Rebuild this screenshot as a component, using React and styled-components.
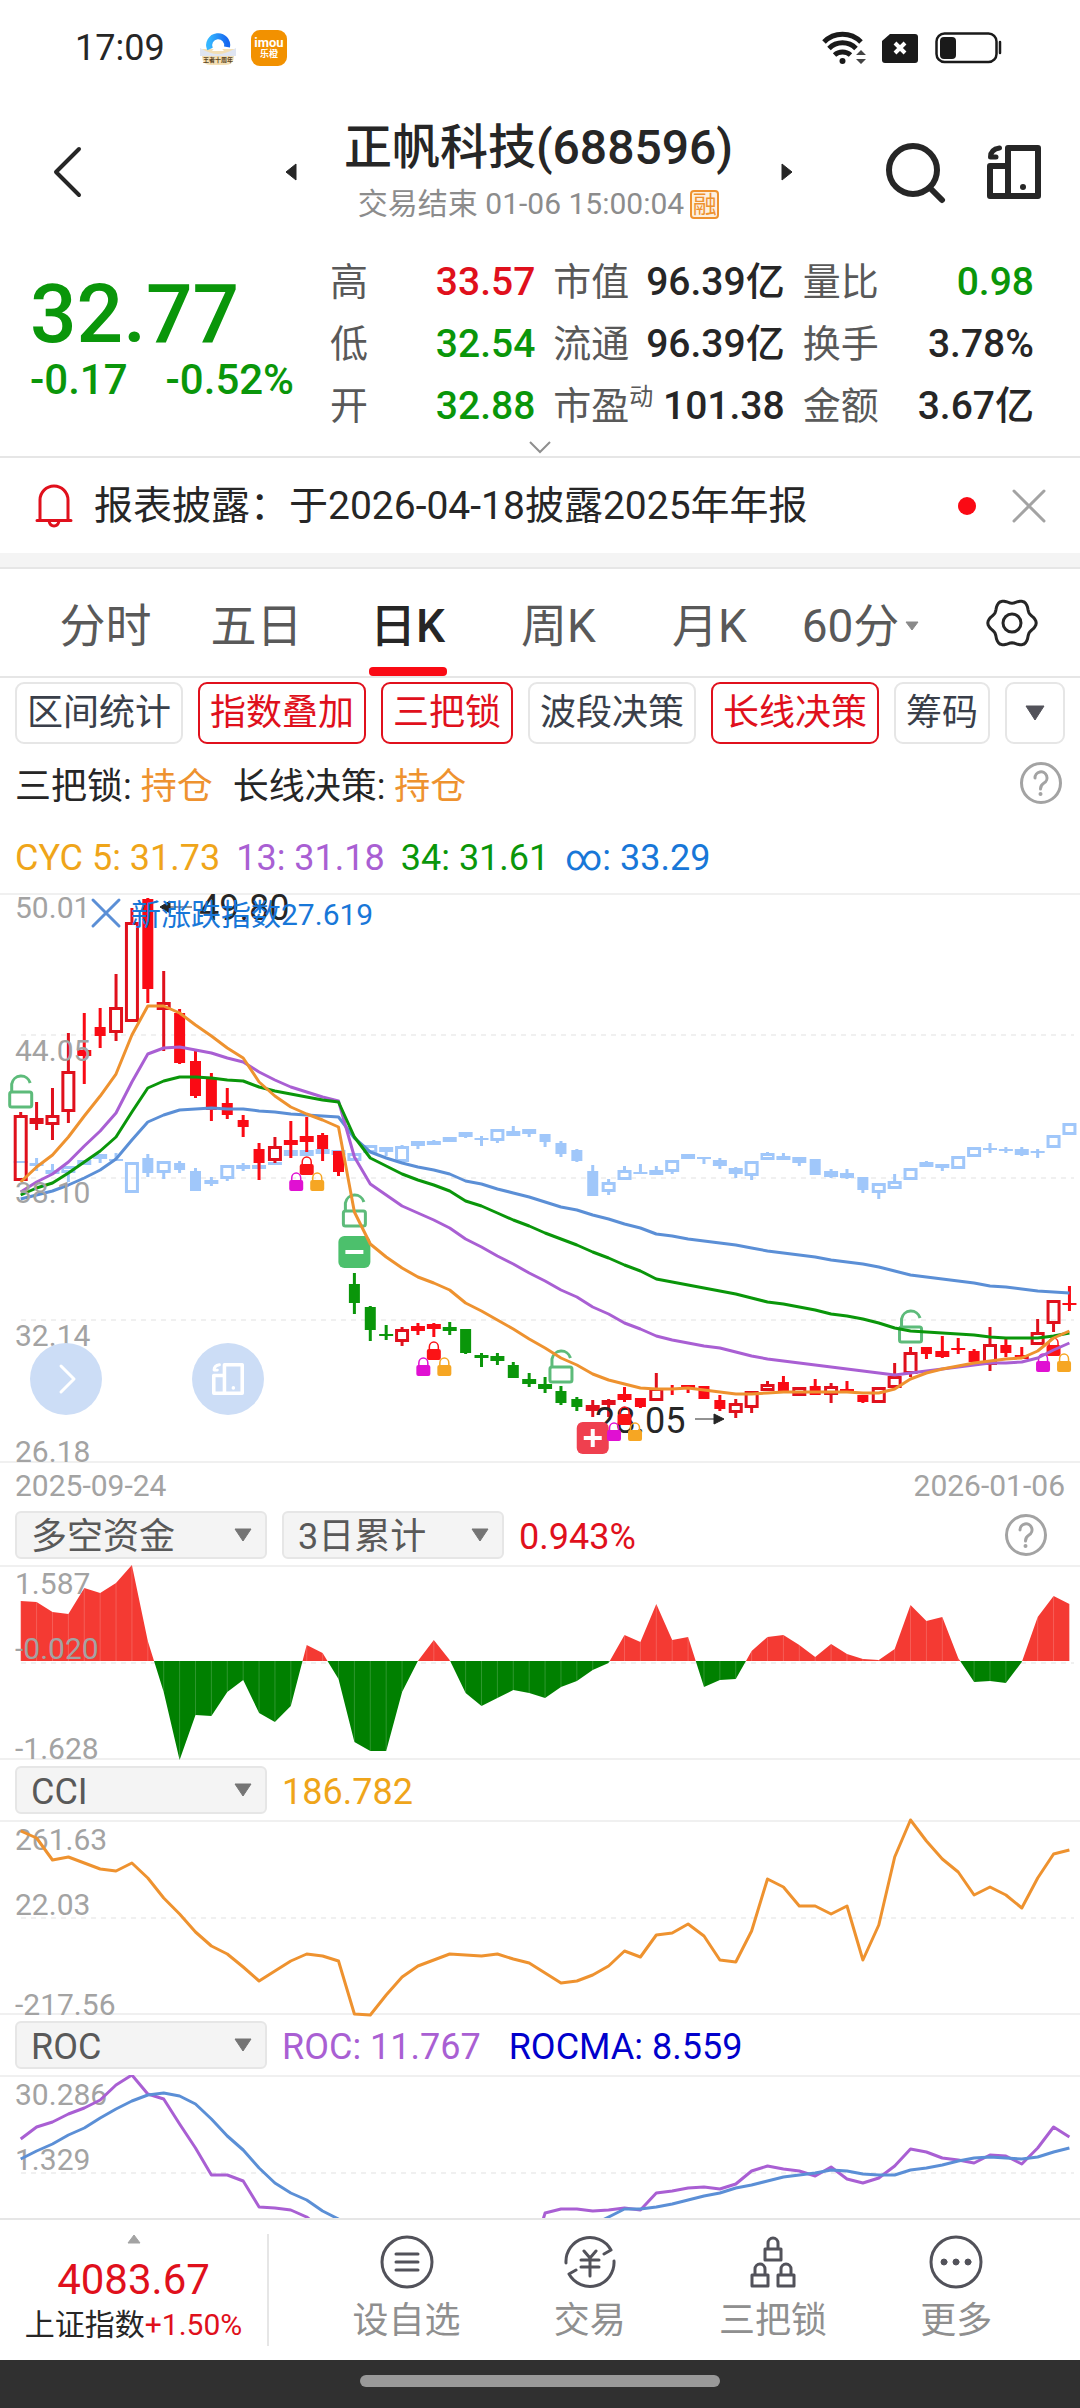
import React from "react";
import styled, { createGlobalStyle } from "styled-components";

const C = {
  ink: "#262626",
  mid: "#595959",
  soft: "#8f8f8f",
  axis: "#a3a3a3",
  line: "#e6e6e6",
  grid: "#f0f0f0",
  red: "#e0101c",
  hot: "#fa0a14",
  green: "#0a960a",
  orange: "#ee922f",
  gold: "#efa51a",
  purple: "#a95fd3",
  blue: "#5b8fd6",
  sky: "#1877d8",
  pale: "#a0c7fa",
};

const FONT = 'Roboto, "Noto Sans CJK SC", sans-serif';

const Global = createGlobalStyle`
  * { box-sizing: border-box; }
  body { margin: 0; background: #fff; color: ${C.ink}; font-family: ${FONT}; font-size: 36px; }
  button, select { font: inherit; color: inherit; background: none; border: 0; padding: 0; margin: 0; }
  svg { display: block; }
`;

/* ---------- series ---------- */

const STEP = 15.89;
const xAt = (i) => 20.7 + STEP * i;

// [kind, high, top, bottom, low]; h = hollow, r = filled red, g = filled green
const CANDLES = [
  ["h", 219, 222, 288, 288], ["h", 209, 225, 231, 237], ["h", 195, 222, 232, 247], ["h", 140, 178, 219, 230],
  ["r", 120, 157, 163, 191], ["r", 115, 134, 143, 155], ["h", 81, 114, 140, 148], ["h", 15, 29, 129, 129],
  ["r", 5, 6, 96, 110], ["h", 78, 109, 117, 158], ["r", 116, 120, 170, 171], ["r", 158, 168, 203, 205],
  ["r", 180, 185, 217, 228], ["r", 195, 210, 222, 226], ["r", 222, 227, 234, 244], ["r", 250, 256, 270, 287],
  ["h", 244, 253, 268, 270], ["r", 228, 247, 252, 265], ["r", 224, 243, 249, 259], ["r", 240, 242, 256, 268],
  ["r", 258, 258, 279, 283], ["g", 380, 391, 410, 421], ["g", 413, 414, 437, 448], ["g", 432, 441, 443, 447],
  ["h", 434, 436, 449, 453], ["r", 430, 433, 438, 442], ["r", 430, 431, 436, 444], ["g", 429, 434, 438, 442],
  ["g", 436, 436, 460, 461], ["g", 460, 462, 465, 474], ["g", 460, 463, 468, 472], ["g", 469, 472, 485, 485],
  ["g", 480, 486, 491, 494], ["g", 484, 491, 496, 500], ["g", 493, 498, 510, 512], ["g", 504, 506, 514, 518],
  ["h", 507, 512, 518, 524], ["h", 506, 507, 512, 524], ["r", 494, 501, 507, 509], ["r", 505, 505, 514, 515],
  ["h", 480, 495, 508, 508], ["r", 492, 495, 497, 502], ["r", 492, 492, 496, 500], ["r", 493, 493, 506, 506],
  ["r", 502, 507, 516, 518], ["h", 506, 510, 520, 525], ["h", 498, 498, 515, 520], ["h", 488, 491, 498, 498],
  ["r", 483, 489, 499, 499], ["h", 494, 494, 503, 503], ["r", 486, 493, 502, 502], ["h", 490, 493, 502, 510],
  ["r", 488, 496, 498, 498], ["r", 502, 502, 509, 510], ["h", 494, 494, 510, 510], ["h", 470, 483, 495, 495],
  ["h", 454, 459, 481, 484], ["r", 454, 454, 461, 466], ["r", 443, 458, 464, 465], ["r", 445, 455, 457, 461],
  ["r", 456, 458, 469, 469], ["h", 434, 451, 472, 478], ["r", 445, 452, 460, 464], ["r", 454, 462, 466, 466],
  ["h", 426, 439, 452, 452], ["h", 407, 407, 431, 439], ["r", 393, 410, 412, 418],
];

const INDEX = [
  ["r", 268, 268, 270, 270], ["r", 265, 270, 273, 278], ["r", 271, 277, 281, 281], ["h", 273, 273, 280, 289],
  ["r", 267, 267, 272, 272], ["r", 261, 261, 266, 270], ["r", 260, 266, 268, 268], ["h", 269, 269, 300, 300],
  ["r", 261, 265, 280, 284], ["h", 268, 268, 280, 286], ["r", 268, 270, 277, 280], ["r", 275, 278, 298, 298],
  ["r", 284, 287, 291, 293], ["h", 272, 272, 286, 288], ["r", 270, 272, 276, 278], ["r", 267, 272, 276, 276],
  ["r", 269, 269, 272, 272], ["r", 257, 257, 263, 263], ["r", 257, 257, 263, 263], ["r", 256, 256, 261, 261],
  ["r", 257, 257, 262, 262], ["h", 260, 260, 268, 268], ["h", 252, 252, 260, 260], ["r", 254, 254, 259, 263],
  ["h", 252, 253, 269, 269], ["h", 248, 248, 253, 256], ["r", 247, 248, 252, 252], ["h", 244, 244, 249, 249],
  ["r", 239, 239, 244, 245], ["r", 243, 245, 247, 253], ["h", 236, 236, 248, 250], ["r", 233, 238, 243, 243],
  ["r", 236, 236, 241, 244], ["r", 241, 241, 249, 254], ["r", 248, 250, 261, 264], ["r", 256, 257, 268, 269],
  ["r", 272, 278, 303, 303], ["h", 286, 289, 299, 302], ["h", 273, 277, 287, 287], ["r", 271, 279, 281, 281],
  ["r", 273, 277, 282, 282], ["h", 267, 267, 279, 281], ["h", 261, 261, 266, 266], ["r", 264, 264, 266, 271],
  ["r", 265, 267, 273, 276], ["r", 274, 275, 281, 285], ["h", 268, 268, 283, 287], ["h", 259, 260, 267, 267],
  ["r", 260, 263, 267, 267], ["r", 264, 264, 270, 273], ["r", 266, 266, 282, 282], ["r", 276, 278, 284, 285],
  ["r", 276, 280, 285, 286], ["r", 284, 284, 297, 300], ["h", 290, 290, 300, 306], ["h", 281, 288, 296, 296],
  ["h", 275, 275, 287, 287], ["r", 268, 269, 274, 274], ["r", 271, 271, 275, 278], ["h", 263, 263, 276, 276],
  ["h", 254, 254, 264, 264], ["r", 250, 255, 257, 260], ["r", 254, 256, 258, 260], ["r", 254, 256, 262, 263],
  ["r", 256, 258, 260, 265], ["h", 242, 242, 255, 255], ["h", 230, 230, 242, 242],
];

const CYC = [
  [C.blue, [306, 302, 298, 292, 285, 277, 266, 247, 229, 222, 217, 216, 215, 216, 216, 218, 219, 221, 222, 223, 224, 245, 259, 265, 270, 274, 277, 281, 288, 291, 296, 300, 304, 309, 314, 317, 322, 326, 331, 335, 341, 343, 346, 348, 350, 352, 355, 358, 360, 362, 364, 367, 369, 371, 374, 378, 382, 384, 386, 388, 390, 393, 394, 396, 398, 399, 400]],
  [C.purple, [299, 289, 281, 269, 253, 238, 220, 189, 161, 155, 154, 157, 160, 165, 169, 179, 187, 194, 199, 204, 208, 264, 291, 302, 313, 320, 327, 335, 346, 354, 363, 371, 380, 388, 397, 404, 414, 421, 430, 436, 443, 447, 450, 453, 455, 459, 463, 466, 468, 470, 472, 474, 476, 478, 480, 482, 480, 478, 476, 474, 472, 470, 470, 469, 465, 457, 450]],
  [C.green, [302, 295, 290, 280, 269, 258, 244, 219, 195, 188, 184, 184, 185, 187, 188, 194, 198, 201, 204, 207, 209, 244, 265, 273, 281, 287, 292, 298, 308, 313, 320, 327, 333, 340, 346, 352, 359, 365, 372, 378, 386, 389, 392, 395, 398, 401, 405, 409, 411, 414, 417, 421, 423, 426, 430, 435, 438, 439, 440, 441, 442, 444, 445, 445, 445, 443, 440]],
  [C.orange, [289, 274, 262, 244, 223, 203, 181, 142, 113, 113, 120, 132, 143, 155, 165, 189, 203, 214, 221, 227, 234, 319, 351, 364, 375, 384, 390, 397, 410, 418, 427, 436, 446, 455, 465, 472, 481, 487, 491, 495, 496, 496, 495, 497, 499, 501, 501, 500, 499, 499, 499, 499, 499, 500, 500, 496, 486, 480, 476, 473, 470, 468, 466, 465, 458, 445, 438]],
];

const FUNDS = [36, 37, 47, 49, 23, 28, 18, 0, 76, 127, 195, 150, 151, 127, 115, 148, 157, 141, 80, 88, 114, 177, 186, 186, 127, 96, 75, 95, 128, 141, 133, 125, 128, 133, 122, 116, 105, 98, 70, 77, 39, 75, 72, 122, 115, 114, 86, 72, 70, 80, 92, 79, 89, 94, 95, 84, 40, 56, 52, 93, 117, 116, 118, 97, 52, 31, 39];

const CCI = [11, 18, 40, 37, 43, 49, 51, 43, 58, 78, 94, 112, 126, 134, 147, 161, 151, 141, 134, 136, 141, 194, 195, 175, 157, 146, 140, 134, 135, 136, 134, 139, 143, 153, 163, 161, 155, 146, 131, 137, 115, 113, 104, 116, 140, 142, 111, 59, 67, 86, 86, 94, 86, 140, 105, 37, 0, 21, 39, 52, 75, 67, 75, 88, 58, 34, 30];

const ROC = [64, 52, 47, 39, 33, 25, 10, 0, 19, 24, 49, 73, 100, 100, 106, 132, 133, 135, 142, 155, 170, 190, 190, 190, 190, 190, 190, 190, 190, 190, 190, 190, 190, 138, 134, 134, 136, 135, 133, 135, 118, 116, 113, 112, 114, 109, 96, 91, 94, 96, 101, 92, 104, 108, 103, 91, 74, 77, 83, 85, 88, 80, 81, 89, 73, 52, 62];

const ROCMA = [84, 76, 69, 60, 53, 43, 34, 26, 20, 18, 21, 29, 44, 61, 75, 93, 108, 118, 125, 136, 144, 160, 180, 180, 180, 180, 180, 180, 180, 180, 180, 180, 180, 180, 180, 165, 150, 142, 134, 134, 132, 129, 125, 121, 118, 113, 110, 106, 102, 100, 98, 95, 96, 99, 100, 100, 95, 93, 90, 86, 83, 82, 83, 84, 82, 77, 73];

const toPoints = (ys) => ys.map((y, i) => `${xAt(i).toFixed(1)},${y}`).join(" ");

/* ---------- drawing parts ---------- */

const Plot = styled.svg`
  width: 100%;
  height: auto;
  overflow: ${(p) => (p.$clip ? "hidden" : "visible")};
  font-family: ${FONT};
`;
const AxisText = styled.text`
  font-size: 30px;
  fill: ${C.axis};
`;
const MarkText = styled.text`
  font-size: 36px;
  fill: ${C.ink};
`;
const NoteText = styled.text`
  font-size: 30px;
  fill: ${C.sky};
`;
const Curve = styled.polyline`
  fill: none;
  stroke: ${(p) => p.$color};
  stroke-width: 3px;
  stroke-linejoin: round;
`;

const GridLine = ({ y }) => <path d={`M21 ${y}H1074`} stroke="#f0f0f0" strokeWidth="2" strokeDasharray="5 5" />;

function Candle({ i, data, tint }) {
  const [kind, high, top, bottom, low] = data;
  const x = xAt(i);
  const h = Math.max(bottom - top, 2);
  const color = tint || (kind === "g" ? C.green : kind === "h" ? C.red : C.hot);
  if (kind === "h") {
    return (
      <g stroke={color} strokeWidth="3" fill="none">
        <path d={`M${x} ${high}V${top}M${x} ${bottom}V${low}`} />
        <rect x={x - 5.5} y={top + 1.5} width="11" height={Math.max(h - 3, 2)} />
      </g>
    );
  }
  const w = h <= 6 ? 14 : 11;
  return (
    <g fill={color}>
      <rect x={x - 1.5} y={high} width="3" height={low - high} />
      <rect x={x - w / 2} y={top} width={w} height={h} />
    </g>
  );
}

const OpenLock = ({ i, y }) => (
  <g transform={`translate(${xAt(i)} ${y})`} fill="none" stroke="#5dbb7a" strokeWidth="3">
    <rect x="-11" y="18" width="22" height="15" rx="2" />
    <path d="M-9 17V10A9.500 9.500 0 0 1 9.500 9" />
  </g>
);

const SmallLock = ({ x, y, color }) => (
  <g transform={`translate(${x} ${y})`}>
    <path d="M-4.500 9V6A4.500 5 0 0 1 4.500 6V9" fill="none" stroke={color} strokeWidth="1.500" />
    <rect x="-7" y="8" width="14" height="11" rx="2" fill={color} />
  </g>
);

const TripleLock = ({ i, y }) => (
  <g>
    <SmallLock x={xAt(i)} y={y} color="#fb1316" />
    <SmallLock x={xAt(i) - 10.5} y={y + 16} color="#e010d2" />
    <SmallLock x={xAt(i) + 10.5} y={y + 16} color="#f6a623" />
  </g>
);

const Badge = ({ i, y, color, d }) => (
  <g transform={`translate(${xAt(i)} ${y})`}>
    <rect x="-16" width="32" height="32" rx="6" fill={color} />
    <path d={d} stroke="#fff" strokeWidth="4" />
  </g>
);

function PriceChart() {
  return (
    <Plot viewBox="0 0 1080 570" role="img" aria-label="日K">
      <path d="M0 1H1080M0 569H1080" stroke={C.grid} strokeWidth="2" />
      <GridLine y={142} />
      <GridLine y={285} />
      <GridLine y={427} />
      {INDEX.map((d, i) => <Candle key={i} i={i} data={d} tint={C.pale} />)}
      {CANDLES.map((d, i) => <Candle key={i} i={i} data={d} />)}
      <MarkText x="199" y="27">49.80</MarkText>
      <path d="M160 14l10-6v12zM168 14H192" fill={C.ink} stroke={C.ink} />
      <MarkText x="595" y="540">28.05</MarkText>
      <path d="M724 526l-10-5v10zM695 526H716" fill={C.ink} stroke={C.ink} />
      <path d="M93 7l26 26M119 7L93 33" stroke={C.blue} strokeWidth="3" strokeLinecap="round" />
      <NoteText x="131" y="32">新涨跌指数27.619</NoteText>
      <OpenLock i={0} y={181} />
      <OpenLock i={21} y={300} />
      <OpenLock i={34} y={456} />
      <OpenLock i={56} y={416} />
      <Badge i={21} y={343} color="#4cc06c" d="M-9 16H9" />
      <Badge i={36} y={529} color="#ef404f" d="M-9 16H9M0 7V25" />
      <TripleLock i={18} y={263} />
      <TripleLock i={26} y={448} />
      <TripleLock i={38} y={513} />
      <TripleLock i={65} y={444} />
      {CYC.map(([color, ys]) => <Curve key={color} $color={color} points={toPoints(ys)} />)}
      <AxisText x="15" y="25">50.01</AxisText>
      <AxisText x="15" y="168">44.05</AxisText>
      <AxisText x="15" y="310">38.10</AxisText>
      <AxisText x="15" y="453">32.14</AxisText>
      <AxisText x="15" y="569">26.18</AxisText>
    </Plot>
  );
}

function FundsChart() {
  const area = `${xAt(0)},96 ${toPoints(FUNDS)} ${xAt(66)},96`;
  return (
    <Plot viewBox="0 0 1080 195" role="img" aria-label="多空资金">
      <clipPath id="above"><rect width="1080" height="96" /></clipPath>
      <clipPath id="below"><rect y="96" width="1080" height="99" /></clipPath>
      <path d="M0 1H1080M0 194H1080" stroke={C.grid} strokeWidth="2" />
      <GridLine y={98} />
      <polygon points={area} fill="#f43a33" clipPath="url(#above)" />
      <polygon points={area} fill="#008000" clipPath="url(#below)" />
      {FUNDS.map((y, i) => (
        <path key={i} d={`M${xAt(i)} 96V${y}`} stroke="#fff" strokeOpacity="0.18" />
      ))}
      <AxisText x="15" y="29">1.587</AxisText>
      <AxisText x="15" y="94">-0.020</AxisText>
      <AxisText x="15" y="194">-1.628</AxisText>
    </Plot>
  );
}

function CciChart() {
  return (
    <Plot viewBox="0 0 1080 195" role="img" aria-label="CCI">
      <path d="M0 1H1080M0 194H1080" stroke={C.grid} strokeWidth="2" />
      <GridLine y={98} />
      <AxisText x="15" y="30">261.63</AxisText>
      <AxisText x="15" y="95">22.03</AxisText>
      <AxisText x="15" y="195">-217.56</AxisText>
      <Curve $color={C.orange} points={toPoints(CCI)} />
    </Plot>
  );
}

function RocChart() {
  return (
    <Plot $clip viewBox="0 0 1080 143" role="img" aria-label="ROC">
      <path d="M0 1H1080" stroke={C.grid} strokeWidth="2" />
      <GridLine y={98} />
      <AxisText x="15" y="30">30.286</AxisText>
      <AxisText x="15" y="95">1.329</AxisText>
      <Curve $color={C.purple} points={toPoints(ROC)} />
      <Curve $color={C.blue} points={toPoints(ROCMA)} />
    </Plot>
  );
}

/* ---------- icons ---------- */

const PanelIcon = ({ size }) => (
  <svg width={size} height={size} viewBox="0 0 54 54" fill="none" stroke="currentColor" strokeWidth="6" strokeLinejoin="round">
    <path d="M21 3H51V51H21zM21 21H3V51H21" />
    <path d="M12.500 3C6 4 3.500 7 3.500 12H9" strokeWidth="5" strokeLinecap="round" />
    <circle cx="36" cy="42" r="3" fill="currentColor" stroke="none" />
  </svg>
);

const gearPath = Array.from({ length: 72 }, (_, k) => {
  const a = (k * 5 * Math.PI) / 180;
  const r = 22 + 2.2 * Math.cos(6 * a);
  return `${k ? "L" : "M"}${(26 + r * Math.cos(a)).toFixed(1)} ${(26 + r * Math.sin(a)).toFixed(1)}`;
}).join("") + "Z";

const GearIcon = () => (
  <svg width="52" height="52" viewBox="0 0 52 52" fill="none" stroke={C.ink} strokeWidth="3" strokeLinejoin="round">
    <path d={gearPath} />
    <circle cx="26" cy="26" r="9" />
  </svg>
);

const HelpIcon = () => (
  <svg width="44" height="44" viewBox="0 0 44 44" fill="none" stroke={C.axis} strokeWidth="3">
    <circle cx="22" cy="22" r="19.500" />
    <path d="M16 17a6 6 0 1 1 9 5c-2.500 1.500-3.500 2.500-3.500 6" strokeLinecap="round" />
    <circle cx="21.500" cy="33" r="2" fill={C.axis} stroke="none" />
  </svg>
);

const Triangle = ({ w, h, d, color }) => (
  <svg width={w} height={h} viewBox={`0 0 ${w} ${h}`} fill={color} stroke={color} strokeLinejoin="round"><path d={d} /></svg>
);

const FootSvg = ({ children }) => (
  <svg width="54" height="54" viewBox="0 0 54 54" fill="none" stroke="#52525a" strokeWidth="3" strokeLinecap="round" strokeLinejoin="round">{children}</svg>
);

/* ---------- page ---------- */

const Page = styled.main`
  width: 100%;
  display: flex;
  flex-direction: column;
`;

const StatusBar = styled.div`
  height: 96px;
  padding: 0 78px 0 75px;
  display: flex;
  align-items: center;
  justify-content: space-between;
  line-height: 44px;
`;
const StatusGroup = styled.div`
  display: flex;
  align-items: center;
  gap: ${(p) => p.$gap}px;
`;
const Clock = styled.span`
  margin-right: 20px;
`;

const Header = styled.header`
  height: 152px;
  padding: 0 39px 0 36px;
  display: grid;
  grid-template-columns: 1fr 516px 1fr;
  align-items: center;
`;
const IconButton = styled.button`
  display: flex;
  align-items: center;
  justify-content: center;
  color: ${C.ink};
  cursor: pointer;
`;
const HeaderSide = styled.div`
  display: flex;
  gap: 40px;
  justify-content: ${(p) => (p.$end ? "flex-end" : "flex-start")};
`;
const Switcher = styled.div`
  display: flex;
  align-items: center;
  justify-content: space-between;
`;
const TitleBlock = styled.div`
  display: flex;
  flex-direction: column;
  align-items: center;
  gap: 8px;
`;
const Title = styled.h1`
  margin: 0;
  font-size: 48px;
  line-height: 56px;
  font-weight: 500;
`;
const Sub = styled.div`
  display: flex;
  align-items: center;
  gap: 6px;
  font-size: 30px;
  line-height: 40px;
  color: #8c8c8c;
`;
const Tag = styled.span`
  width: 29px;
  height: 29px;
  border: 2px solid ${C.orange};
  border-radius: 4px;
  background: #fdf0df;
  color: ${C.orange};
  font-size: 24px;
  line-height: 26px;
  text-align: center;
`;

const Quote = styled.section`
  padding-top: 3px;
  border-bottom: 2px solid ${C.line};
`;
const QuoteBody = styled.div`
  padding: 0 46px 0 30px;
  display: grid;
  grid-template-columns: 300px 1fr;
`;
const PriceBlock = styled.div`
  padding-top: 20px;
  color: ${C.green};
  font-weight: 500;
`;
const Price = styled.div`
  font-size: 82px;
  line-height: 86px;
`;
const Change = styled.div`
  display: flex;
  gap: 38px;
  font-size: 42px;
  line-height: 46px;
`;
const Stats = styled.dl`
  margin: 0;
  display: grid;
  grid-template-columns: 205fr 231fr 231fr;
  column-gap: 18px;
`;
const Stat = styled.div`
  height: 62px;
  display: flex;
  align-items: center;
  justify-content: space-between;
  line-height: 62px;
  white-space: nowrap;
`;
const StatName = styled.dt`
  font-size: 38px;
  color: ${C.mid};
`;
const Sup = styled.sup`
  font-size: 24px;
  line-height: 24px;
  vertical-align: 14px;
`;
const StatValue = styled.dd`
  margin: 0;
  font-size: 39px;
  font-weight: 500;
  color: ${(p) => p.$color || C.ink};
`;
const Expand = styled(IconButton)`
  width: 100%;
  height: 19px;
  color: ${C.soft};
`;

const Notice = styled.section`
  height: 95px;
  padding: 0 34px;
  display: flex;
  align-items: center;
`;
const NoticeText = styled.p`
  flex: 1;
  margin: 0 0 0 20px;
  font-size: 39px;
  line-height: 56px;
`;
const Dot = styled.span`
  width: 18px;
  height: 18px;
  margin-right: 36px;
  border-radius: 50%;
  background: ${C.hot};
`;
const Band = styled.div`
  height: 16px;
  background: #f4f4f4;
  border-bottom: 2px solid ${C.line};
`;

const TabBar = styled.nav`
  height: 109px;
  padding-left: 30px;
  display: grid;
  grid-template-columns: repeat(6, 151fr) 144fr;
  border-bottom: 2px solid ${C.line};
`;
const Tab = styled.button`
  display: flex;
  flex-direction: column;
  align-items: center;
  justify-content: flex-end;
  font-size: 46px;
  line-height: 82px;
  color: ${(p) => (p.$on ? C.ink : C.mid)};
  font-weight: ${(p) => (p.$on ? 500 : 400)};
  &::after {
    content: "";
    width: 78px;
    height: 9px;
    border-radius: 4px;
    background: ${(p) => (p.$on ? C.hot : "transparent")};
  }
`;
const TabLabel = styled.span`
  display: flex;
  align-items: center;
  gap: 6px;
`;
const GearButton = styled(IconButton)`
  padding-left: 8px;
`;

const Chips = styled.div`
  padding: 4px 15px 0;
  display: flex;
  justify-content: space-between;
`;
const Chip = styled.button`
  height: 62px;
  min-width: 60px;
  padding: 0 10px;
  display: flex;
  align-items: center;
  justify-content: center;
  border: 2px solid ${(p) => (p.$on ? C.red : C.line)};
  border-radius: 9px;
  color: ${(p) => (p.$on ? C.red : "#3a3f4a")};
  line-height: 58px;
`;

const Line = styled.div`
  height: ${(p) => p.$h}px;
  padding: 0 17px 0 15px;
  display: flex;
  align-items: center;
  gap: ${(p) => p.$gap}px;
`;
const Tint = styled.span`
  color: ${(p) => p.$color};
`;
const Spacer = styled.span`
  flex: 1;
`;

const ChartBox = styled.section`
  position: relative;
`;
const FloatBar = styled.div`
  position: absolute;
  left: 30px;
  bottom: 48px;
  display: flex;
  gap: 90px;
`;
const FloatButton = styled.button`
  width: 72px;
  height: 72px;
  border-radius: 50%;
  display: flex;
  align-items: center;
  justify-content: center;
  background: #ccddf6;
  color: #fff;
`;
const Dates = styled.div`
  height: 42px;
  padding: 0 15px;
  display: flex;
  justify-content: space-between;
  font-size: 30px;
  line-height: 46px;
  color: ${C.axis};
`;

const PanelHead = styled.div`
  height: 60px;
  padding: 0 32px 0 15px;
  display: flex;
  align-items: center;
  gap: 15px;
`;
const Picker = styled.div`
  position: relative;
  width: ${(p) => p.$w}px;
`;
const Select = styled.select`
  appearance: none;
  width: 100%;
  height: 48px;
  padding: 3px 14px 0;
  border: 2px solid ${C.line};
  border-radius: 6px;
  background: #f4f4f4;
  color: ${C.mid};
  font-size: 36px;
  line-height: 42px;
`;
const PickerArrow = styled.span`
  position: absolute;
  right: 15px;
  top: 17px;
  pointer-events: none;
`;
const Values = styled.div`
  flex: 1;
  padding-top: 4px;
  display: flex;
  gap: 28px;
`;

const Footer = styled.footer`
  height: 142px;
  border-top: 2px solid ${C.line};
  display: flex;
  align-items: center;
`;
const IndexBox = styled.button`
  width: 269px;
  height: 112px;
  display: flex;
  flex-direction: column;
  align-items: center;
  border-right: 2px solid ${C.line};
  color: ${C.red};
`;
const IndexValue = styled.span`
  margin-top: 8px;
  font-size: 42px;
  line-height: 56px;
`;
const IndexName = styled.span`
  font-size: 30px;
  line-height: 34px;
`;
const Actions = styled.nav`
  flex: 1;
  padding: 0 32px 0 46px;
  display: grid;
  grid-template-columns: repeat(4, 1fr);
`;
const Action = styled.button`
  display: flex;
  flex-direction: column;
  align-items: center;
  gap: 8px;
  color: ${C.soft};
  line-height: 48px;
`;
const SystemBar = styled.div`
  height: 48px;
  display: flex;
  align-items: center;
  justify-content: center;
  background: #303030;
`;
const Handle = styled.span`
  width: 33.3%;
  height: 12px;
  margin-bottom: 6px;
  border-radius: 6px;
  background: #999;
`;

const STATS = [
  ["高", "33.57", C.red], ["市值", "96.39亿"], ["量比", "0.98", C.green],
  ["低", "32.54", C.green], ["流通", "96.39亿"], ["换手", "3.78%"],
  ["开", "32.88", C.green], ["市盈", "101.38", null, "动"], ["金额", "3.67亿"],
];

const CHIPS = [["区间统计"], ["指数叠加", true], ["三把锁", true], ["波段决策"], ["长线决策", true], ["筹码"]];

function IndicatorPicker({ label, value, width }) {
  return (
    <Picker $w={width}>
      <Select aria-label={label} defaultValue={value}>
        <option>{value}</option>
      </Select>
      <PickerArrow><Triangle w={18} h={14} color="#757575" d="M1 1H17L9 13z" /></PickerArrow>
    </Picker>
  );
}

function MiniLock({ x, y }) {
  return <path d={`M${x} ${y + 12}h16v11h-16zM${x + 3} ${y + 12}v-6a5 5 0 0 1 10 0v6`} />;
}

export default function App() {
  return (
    <Page>
      <Global />
      <StatusBar>
        <StatusGroup $gap={15}>
          <Clock>17:09</Clock>
          <svg width="36" height="36" viewBox="0 0 36 36">
            <defs>
              <linearGradient id="arc" x1="0" x2="1"><stop offset="0" stopColor="#35b6ff" /><stop offset="1" stopColor="#1668f0" /></linearGradient>
            </defs>
            <path d="M2 19h32v7q0 9-9 9H11q-9 0-9-9z" fill="#f3dfb4" />
            <path d="M0 18Q10 24 18 24T36 18V26H0z" fill="#dfe5f2" />
            <path d="M10 19A9 9 0 1 1 27 17" fill="none" stroke="url(#arc)" strokeWidth="6" />
            <path d="M12 21q6-8 12 0z" fill="#fff" />
            <text x="18" y="32" fontSize="6" fontWeight="700" textAnchor="middle" fill="#5b4423">王者十周年</text>
          </svg>
          <svg width="36" height="36" viewBox="0 0 36 36">
            <rect width="36" height="36" rx="9" fill="#f29100" />
            <text x="18" y="17" fontSize="13" fontWeight="700" textAnchor="middle" fill="#fff">imou</text>
            <text x="18" y="27" fontSize="9" fontWeight="700" textAnchor="middle" fill="#fff">乐橙</text>
          </svg>
        </StatusGroup>
        <StatusGroup $gap={16}>
          <svg width="44" height="36" viewBox="0 0 44 36" fill="none" stroke="#1a1a1a" strokeWidth="5">
            <path d="M2 12A26 26 0 0 1 39 12M7 18.500A19 19 0 0 1 34 18.500M12.500 25A12 12 0 0 1 28.500 25" />
            <circle cx="20.500" cy="31" r="3" fill="#1a1a1a" stroke="none" />
            <path d="M34 25l5-5 5 5zM34 29l5 5 5-5z" fill="#444" stroke="none" />
          </svg>
          <svg width="36" height="29" viewBox="0 0 36 29">
            <path d="M8 0H33Q36 0 36 3V26Q36 29 33 29H3Q0 29 0 26V7z" fill="#1a1a1a" />
            <path d="M13 9l10 10M23 9L13 19" stroke="#fff" strokeWidth="4" />
          </svg>
          <svg width="68" height="32" viewBox="0 0 68 32">
            <rect x="2.500" y="1.500" width="60" height="28.500" rx="8" fill="none" stroke="#1a1a1a" strokeWidth="2.500" />
            <rect x="6" y="5" width="16" height="22" rx="4" fill="#1a1a1a" />
            <path d="M66 10v11" stroke="#1a1a1a" strokeWidth="2.500" strokeLinecap="round" />
          </svg>
        </StatusGroup>
      </StatusBar>

      <Header>
        <HeaderSide>
          <IconButton aria-label="返回">
            <svg width="62" height="54" viewBox="0 0 62 54" fill="none" stroke={C.ink} strokeWidth="4" strokeLinecap="round" strokeLinejoin="round">
              <path d="M43 4L20 27L43 50" />
            </svg>
          </IconButton>
        </HeaderSide>
        <Switcher>
          <IconButton aria-label="上一只"><Triangle w={20} h={20} color={C.ink} d="M15 2V18L5 10z" /></IconButton>
          <TitleBlock>
            <Title>正帆科技(688596)</Title>
            <Sub>交易结束 01-06 15:00:04<Tag>融</Tag></Sub>
          </TitleBlock>
          <IconButton aria-label="下一只"><Triangle w={20} h={20} color={C.ink} d="M5 2V18L15 10z" /></IconButton>
        </Switcher>
        <HeaderSide $end>
          <IconButton aria-label="搜索">
            <svg width="64" height="64" viewBox="0 0 64 64" fill="none" stroke={C.ink} strokeWidth="6" strokeLinecap="round">
              <circle cx="30" cy="30" r="24" />
              <path d="M48 49l11 11" />
            </svg>
          </IconButton>
          <IconButton aria-label="横屏"><PanelIcon size={54} /></IconButton>
        </HeaderSide>
      </Header>

      <Quote>
        <QuoteBody>
          <PriceBlock>
            <Price>32.77</Price>
            <Change><span>-0.17</span><span>-0.52%</span></Change>
          </PriceBlock>
          <Stats>
            {STATS.map(([name, value, color, sup]) => (
              <Stat key={name}>
                <StatName>{name}{sup && <Sup>{sup}</Sup>}</StatName>
                <StatValue $color={color}>{value}</StatValue>
              </Stat>
            ))}
          </Stats>
        </QuoteBody>
        <Expand aria-label="展开">
          <svg width="24" height="14" viewBox="0 0 24 14" fill="none" stroke="currentColor" strokeWidth="2"><path d="M2 2l10 10L22 2" /></svg>
        </Expand>
      </Quote>

      <Notice>
        <svg width="40" height="46" viewBox="0 0 40 46" fill="none" stroke={C.red} strokeWidth="3" strokeLinejoin="round" strokeLinecap="round">
          <path d="M6 37V17A14 14 0 0 1 34 17V37M3 37.500H37M15 38Q16 43 20 43T25 38" />
        </svg>
        <NoticeText>报表披露：于2026-04-18披露2025年年报</NoticeText>
        <Dot />
        <IconButton aria-label="关闭">
          <svg width="34" height="34" viewBox="0 0 34 34" stroke={C.axis} strokeWidth="3" strokeLinecap="round"><path d="M2 2l30 30M32 2L2 32" /></svg>
        </IconButton>
      </Notice>
      <Band />

      <TabBar>
        {["分时", "五日", "日K", "周K", "月K"].map((t) => <Tab key={t} $on={t === "日K"}>{t}</Tab>)}
        <Tab><TabLabel>60分<Triangle w={14} h={10} color="#8a8a8a" d="M1 1H13L7 9z" /></TabLabel></Tab>
        <GearButton aria-label="设置"><GearIcon /></GearButton>
      </TabBar>

      <Chips>
        {CHIPS.map(([name, on]) => <Chip key={name} $on={on}>{name}</Chip>)}
        <Chip aria-label="更多指标"><Triangle w={20} h={16} color="#52525a" d="M1 1H19L10 15z" /></Chip>
      </Chips>

      <Line $h={78} $gap={20}>
        <span>三把锁: <Tint $color={C.orange}>持仓</Tint></span>
        <span>长线决策: <Tint $color={C.orange}>持仓</Tint></span>
        <Spacer />
        <IconButton aria-label="帮助"><HelpIcon /></IconButton>
      </Line>
      <Line $h={71} $gap={16}>
        <Tint $color={C.gold}>CYC 5: 31.73</Tint>
        <Tint $color={C.purple}>13: 31.18</Tint>
        <Tint $color={C.green}>34: 31.61</Tint>
        <Tint $color={C.sky}>∞: 33.29</Tint>
      </Line>

      <ChartBox>
        <PriceChart />
        <FloatBar>
          <FloatButton aria-label="展开工具">
            <svg width="32" height="32" viewBox="0 0 32 32" fill="none" stroke="#fff" strokeWidth="3" strokeLinecap="round" strokeLinejoin="round"><path d="M11 3l13 13-13 13" /></svg>
          </FloatButton>
          <FloatButton aria-label="横屏查看"><PanelIcon size={32} /></FloatButton>
        </FloatBar>
      </ChartBox>
      <Dates><span>2025-09-24</span><span>2026-01-06</span></Dates>

      <section>
        <PanelHead>
          <IndicatorPicker label="指标一" value="多空资金" width={252} />
          <IndicatorPicker label="周期" value="3日累计" width={222} />
          <Values><Tint $color={C.red}>0.943%</Tint></Values>
          <IconButton aria-label="指标帮助"><HelpIcon /></IconButton>
        </PanelHead>
        <FundsChart />
      </section>

      <section>
        <PanelHead>
          <IndicatorPicker label="指标二" value="CCI" width={252} />
          <Values><Tint $color={C.gold}>186.782</Tint></Values>
        </PanelHead>
        <CciChart />
      </section>

      <section>
        <PanelHead>
          <IndicatorPicker label="指标三" value="ROC" width={252} />
          <Values>
            <Tint $color={C.purple}>ROC: 11.767</Tint>
            <Tint $color="#0000cc">ROCMA: 8.559</Tint>
          </Values>
        </PanelHead>
        <RocChart />
      </section>

      <Footer>
        <IndexBox>
          <Triangle w={14} h={10} color={C.axis} d="M1 9H13L7 1z" />
          <IndexValue>4083.67</IndexValue>
          <IndexName><Tint $color={C.ink}>上证指数</Tint>+1.50%</IndexName>
        </IndexBox>
        <Actions>
          <Action>
            <FootSvg><circle cx="27" cy="27" r="25" /><path d="M16 19H38M16 27H38M16 35H38" /></FootSvg>
            设自选
          </Action>
          <Action>
            <FootSvg>
              <path d="M3 28A24 24 0 0 1 48 15L41 19M51 26A24 24 0 0 1 6 39L13 35M21 16L27 23L33 16M18 25H36M18 32H36M27 23V41" />
            </FootSvg>
            交易
          </Action>
          <Action>
            <FootSvg><MiniLock x={19} y={2} /><MiniLock x={6} y={28} /><MiniLock x={32} y={28} /></FootSvg>
            三把锁
          </Action>
          <Action>
            <FootSvg>
              <circle cx="27" cy="27" r="25" />
              <g fill="#52525a" strokeWidth="1"><circle cx="15" cy="27" r="3" /><circle cx="27" cy="27" r="3" /><circle cx="39" cy="27" r="3" /></g>
            </FootSvg>
            更多
          </Action>
        </Actions>
      </Footer>
      <SystemBar><Handle /></SystemBar>
    </Page>
  );
}
